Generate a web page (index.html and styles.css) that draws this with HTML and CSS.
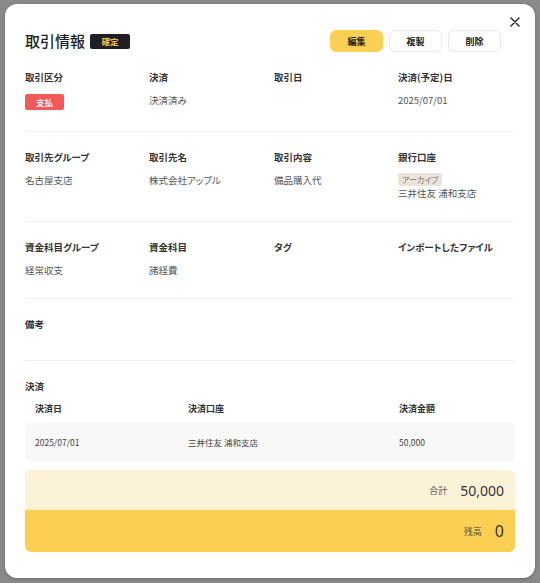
FILE: index.html
```html
<!DOCTYPE html>
<html lang="ja">
<head>
<meta charset="utf-8">
<title>取引情報</title>
<link rel="stylesheet" href="styles.css">
</head>
<body>
<div class="backdrop">
  <div class="modal">
    <button class="close" aria-label="閉じる">
      <svg width="10" height="10" viewBox="0 0 10 10"><path d="M1 1L9 9M9 1L1 9" stroke="#222" stroke-width="1.4" stroke-linecap="round"/></svg>
    </button>
    <header class="head">
      <div class="title-wrap">
        <h1 class="title">取引情報</h1>
        <span class="status">確定</span>
      </div>
      <div class="actions">
        <button class="btn btn-primary">編集</button>
        <button class="btn">複製</button>
        <button class="btn">削除</button>
      </div>
    </header>

    <section class="section grid">
      <div class="field"><div class="label">取引区分</div><div class="value"><span class="kind">支払</span></div></div>
      <div class="field"><div class="label">決済</div><div class="value">決済済み</div></div>
      <div class="field"><div class="label">取引日</div><div class="value"></div></div>
      <div class="field"><div class="label">決済(予定)日</div><div class="value">2025/07/01</div></div>
    </section>

    <section class="section grid">
      <div class="field"><div class="label">取引先グループ</div><div class="value">名古屋支店</div></div>
      <div class="field"><div class="label">取引先名</div><div class="value">株式会社アップル</div></div>
      <div class="field"><div class="label">取引内容</div><div class="value">備品購入代</div></div>
      <div class="field"><div class="label">銀行口座</div><div class="value"><span class="archive">アーカイブ</span><span class="bank">三井住友 浦和支店</span></div></div>
    </section>

    <section class="section grid">
      <div class="field"><div class="label">資金科目グループ</div><div class="value">経常収支</div></div>
      <div class="field"><div class="label">資金科目</div><div class="value">諸経費</div></div>
      <div class="field"><div class="label">タグ</div><div class="value"></div></div>
      <div class="field"><div class="label">インポートしたファイル</div><div class="value"></div></div>
    </section>

    <section class="section note">
      <div class="label">備考</div>
    </section>

    <section class="payments">
      <div class="label">決済</div>
      <div class="table-head">
        <span>決済日</span><span>決済口座</span><span>決済金額</span>
      </div>
      <div class="table-row">
        <span>2025/07/01</span><span>三井住友 浦和支店</span><span>50,000</span>
      </div>
    </section>

    <div class="summary">
      <div class="sum-row sum-total"><span class="sum-label">合計</span><span class="sum-num">50,000</span></div>
      <div class="sum-row sum-balance"><span class="sum-label">残高</span><span class="sum-num big">0</span></div>
    </div>
  </div>
</div>
</body>
</html>
```

FILE: styles.css
```css
* { box-sizing: border-box; }
html, body { margin: 0; padding: 0; }
body {
  font-family: "Noto Sans CJK JP", "Noto Sans", sans-serif;
  font-feature-settings: "palt";
  color: #333;
  background: #8a8a8a;
  width: 540px;
  height: 583px;
  overflow: hidden;
}
.backdrop {
  width: 540px;
  height: 583px;
  padding: 4px 5px 5px 5px;
  background: #898989;
}
.modal {
  position: relative;
  width: 530px;
  height: 574px;
  background: #fff;
  border-radius: 12px;
  padding: 26px 20px 0 20px;
  box-shadow: 0 1px 3px rgba(0,0,0,0.25);
}
.close {
  position: absolute;
  top: 12px;
  right: 14px;
  width: 12px;
  height: 12px;
  padding: 0;
  border: 0;
  background: none;
  display: flex;
  align-items: center;
  justify-content: center;
}
.head {
  display: flex;
  justify-content: space-between;
  align-items: center;
  height: 22px;
}
.title-wrap { display: flex; align-items: center; gap: 5px; }
.title {
  margin: 0;
  font-size: 15px;
  font-weight: 500;
  color: #222;
  line-height: 22px;
}
.status {
  display: inline-flex;
  align-items: center;
  justify-content: center;
  width: 40px;
  height: 15px;
  background: #1f2026;
  color: #f4c545;
  font-size: 8.5px;
  font-weight: 700;
  border-radius: 2px;
}
.actions { display: flex; gap: 6px; margin-right: 14px; }
.btn {
  width: 53px;
  height: 22px;
  border: 1px solid #e8e8e8;
  background: #fff;
  border-radius: 6px;
  font-family: inherit;
  font-feature-settings: "palt";
  font-size: 9px;
  font-weight: 700;
  color: #222;
  padding: 0;
}
.btn-primary { background: #fbd052; border-color: #fbd052; }

.section {
  padding: 18px 0 21px;
  border-bottom: 1px solid #efefef;
}
.grid {
  display: grid;
  grid-template-columns: 124px 125px 124px 1fr;
}
.field { display: flex; flex-direction: column; gap: 9px; }
.label {
  font-size: 9.5px;
  font-weight: 700;
  line-height: 14px;
  color: #333;
}
.value {
  font-size: 9.5px;
  line-height: 14px;
  color: #555;
  display: flex;
  flex-direction: column;
  align-items: flex-start;
  min-height: 14px;
}
.kind {
  display: inline-flex;
  align-items: center;
  justify-content: center;
  width: 39px;
  height: 16px;
  margin-top: 1px;
  background: #f25a5a;
  color: #fff;
  font-size: 8.5px;
  font-weight: 700;
  border-radius: 2px;
}
.archive {
  display: inline-block;
  height: 13px;
  line-height: 13px;
  padding: 0 4px;
  background: #ebe3da;
  color: #777;
  font-size: 8px;
  border-radius: 2px;
}
.note { padding-bottom: 29px; }

.payments { padding-top: 18px; }
.table-head, .table-row {
  display: grid;
  grid-template-columns: 153px 211px 1fr;
  padding: 0 10px;
  font-size: 9px;
}
.table-head {
  margin-top: 9px;
  line-height: 14px;
  font-weight: 700;
  color: #333;
}
.table-row {
  margin-top: 6px;
  height: 39px;
  align-items: center;
  background: #f8f8f8;
  border-radius: 6px;
  color: #444;
  font-size: 8.5px;
}

.summary {
  margin-top: 9px;
  border-radius: 6px;
  overflow: hidden;
}
.sum-row {
  display: flex;
  justify-content: flex-end;
  align-items: center;
  gap: 13px;
  padding-right: 11px;
}
.sum-total { height: 40px; background: #fcf2d8; }
.sum-balance { height: 42px; background: #fbd052; }
.sum-label { font-size: 9px; color: #555; }
.sum-num { font-size: 14px; color: #333; font-family: "Noto Sans", "Noto Sans CJK JP", sans-serif; }
.sum-num.big { font-size: 16px; }
```
